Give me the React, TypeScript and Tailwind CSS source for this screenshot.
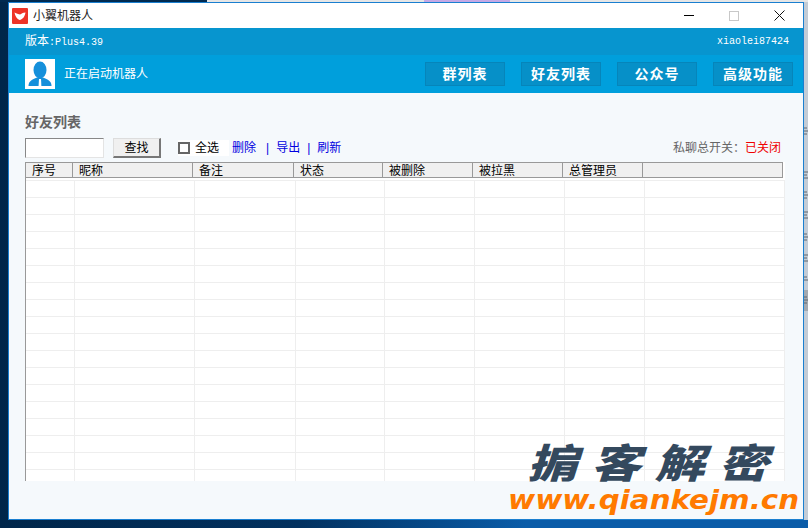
const cjk = "font-['Liberation_Sans','Noto_Sans_CJK_SC',sans-serif]";

const columns = [
  { title: "序号", width: "w-[47px]" },
  { title: "昵称", width: "w-[120px]" },
  { title: "备注", width: "w-[101px]" },
  { title: "状态", width: "w-[89px]" },
  { title: "被删除", width: "w-[90px]" },
  { title: "被拉黑", width: "w-[90px]" },
  { title: "总管理员", width: "w-[80px]" },
  { title: "", width: "flex-1" },
];

const rows = Array.from({ length: 18 }, (_, i) => i);

const NavButton = ({ label }: { label: string }) => (
  <button className="w-[80px] h-[24px] bg-[#0690c8] border border-[#0685ba] text-white text-[14px] font-bold tracking-[1px] flex items-center justify-center">
    {label}
  </button>
);

const Logo = () => (
  <svg width="16" height="16" viewBox="0 0 16 16">
    <rect width="16" height="16" rx="1" fill="#ee3327" />
    <path d="M2.5 4.5C4 5 5 6 8 6.5C9.5 6 10.5 4.5 13.5 4.5C13 8 11 11.5 7.5 12C5 11 3 8 2.5 4.5Z" fill="#fff" />
  </svg>
);

const Avatar = () => (
  <div className="w-[30px] h-[30px] bg-white flex items-center justify-center">
    <svg width="30" height="30" viewBox="0 0 30 30">
      <ellipse cx="15" cy="11" rx="6.5" ry="8.5" fill="#1590db" />
      <path d="M3.5 27C3.5 22 7 20.5 12 18.5H18C23 20.5 26.5 22 26.5 27Z" fill="#1590db" />
      <path d="M14 20H16L16.4 27H13.6Z" fill="#fff" />
    </svg>
  </div>
);

// sliver of the window behind, only the cut ends of its text show
const BehindWindow = () => (
  <svg width="4" height="518" viewBox="0 0 4 518" className="block">
    <rect width="4" height="518" fill="#c3ccd6" />
    <rect y="288" width="4" height="21" fill="#a3a9b0" />
    <path
      d="M0 126H3M0 129H4M0 132H3M0 170H4M0 173H3M0 176H4M0 190H3M0 193H4M0 196H3M0 210H4M0 213H3M0 216H4M0 232H3M0 235H4M0 238H3M0 253H4M0 256H3M0 259H4M0 275H3M0 278H4M0 295H3M0 298H4M0 301H3"
      stroke="#5f666e"
      strokeWidth="1"
    />
  </svg>
);

const App = () => {
  return (
    <div className={`relative w-[808px] h-[528px] overflow-hidden bg-[linear-gradient(90deg,#00264a,#02315f_37%,#0a5ca8_65%,#0a5ca8)] ${cjk}`}>
      {/* desktop strip above the window */}
      <div className="flex h-[2px]">
        <div className="w-[207px] bg-[#012a50]" />
        <div className="w-[217px] bg-[#e6e6e6]" />
        <div className="w-[86px] bg-[#c5a9e6]" />
        <div className="flex-1 bg-[#e6e6e6]" />
      </div>

      <div className="flex h-[518px]">
        <div className="w-[8px]" />
        <div className="w-[796px] border border-[#1a7fd0] flex flex-col">
          <div className="h-[25px] bg-white flex items-center pl-[3px]">
            <Logo />
            <span className="ml-[5px] text-[12px] text-[#222]">小翼机器人</span>
            <div className="ml-auto flex items-center">
              <div className="w-[10px] h-[1px] bg-black mr-[35px]" />
              <div className="w-[10px] h-[10px] border border-[#c8c8c8] mr-[35px]" />
              <svg width="11" height="11" viewBox="0 0 11 11" className="mr-[18px]">
                <path d="M0.5 0.5L10.5 10.5M10.5 0.5L0.5 10.5" stroke="#111" strokeWidth="1" />
              </svg>
            </div>
          </div>

          <div className="h-[27px] bg-[#0795cf] flex items-center justify-between pl-[16px] pr-[14px] text-white text-[10px] font-['Liberation_Mono','Noto_Sans_CJK_SC',monospace]">
            <span>
              <span className="text-[12px]">版本</span>:Plus4.39
            </span>
            <span>xiaolei87424</span>
          </div>

          <div className="h-[38px] bg-[#009fdc] flex items-center pl-[16px] pr-[10px]">
            <Avatar />
            <span className="ml-[9px] text-[12px] text-white">正在启动机器人</span>
            <div className="ml-auto flex gap-[16px]">
              <NavButton label="群列表" />
              <NavButton label="好友列表" />
              <NavButton label="公众号" />
              <NavButton label="高级功能" />
            </div>
          </div>

          <div className="flex-1 bg-[#f5f9fc] pl-[16px] pr-[19px] pt-[20px]">
            <h2 className="h-[18px] leading-[18px] text-[14px] font-bold text-[#666]">好友列表</h2>

            <div className="mt-[6px] h-[22px] flex items-center text-[12px]">
              <input className="w-[79px] h-[20px] bg-white border border-t-[#888] border-l-[#888] border-r-[#e4e4e4] border-b-[#e4e4e4]" />
              <button className="ml-[9px] w-[48px] h-[20px] bg-[#f0f0f0] border border-[#ddd] border-r-2 border-b-2 border-r-[#777] border-b-[#777] text-black">
                查找
              </button>
              <label className="ml-[17px] w-[51px] h-[16px] bg-white flex items-center text-black">
                <span className="w-[12px] h-[12px] border-2 border-[#666] mr-[5px]" />
                全选
              </label>
              <span className="ml-[3px] text-[#0000e0]">删除</span>
              <span className="ml-[10px] text-[#0000e0]">|</span>
              <span className="ml-[7px] text-[#0000e0]">导出</span>
              <span className="ml-[7px] text-[#0000e0]">|</span>
              <span className="ml-[7px] text-[#0000e0]">刷新</span>
              <span className="ml-auto text-[#666]">私聊总开关：</span>
              <span className="mr-[3px] text-[#f00000]">已关闭</span>
            </div>

            <div className="mt-[3px] w-[760px] h-[319px] bg-white border-l border-[#999] overflow-hidden">
              <div className="flex w-[757px] h-[16px] border-t border-[#999]">
                {columns.map((col) => (
                  <div
                    key={col.title || "end"}
                    className={`${col.width} h-[15px] bg-[#f0f0f0] border-r border-b border-[#999] pl-[6px] text-[12px] leading-[17px] text-black overflow-hidden`}
                  >
                    {col.title}
                  </div>
                ))}
              </div>
              <div className="h-[3px] border-b border-[#eeeeee]" />
              {rows.map((row) => (
                <div key={row} className="flex h-[17px] pl-[2px] border-b border-[#eeeeee]">
                  {columns.map((col) => (
                    <div key={col.title || "end"} className={`${col.width} border-r border-[#eeeeee]`} />
                  ))}
                </div>
              ))}
            </div>
          </div>
        </div>
        <BehindWindow />
      </div>

      {/* watermark over the window */}
      <div className="absolute left-[527px] top-[442px] origin-left scale-x-125 text-[40px] leading-[44px] font-black italic tracking-[11px] text-[#34495e] whitespace-nowrap">
        掮客解密
      </div>
      <div className="absolute left-[508px] top-[485px] origin-left scale-x-[1.13] text-[26px] leading-[30px] font-['DejaVu_Sans',sans-serif] font-bold italic text-[#ff7a00] whitespace-nowrap">
        www.qiankejm.cn
      </div>
    </div>
  );
};

export default App;
